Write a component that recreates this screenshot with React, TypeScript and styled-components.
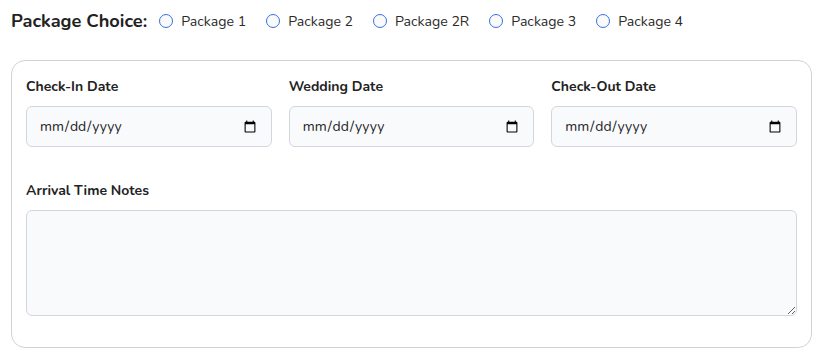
import styled, { createGlobalStyle } from 'styled-components';

const GlobalStyle = createGlobalStyle`
	* { box-sizing: border-box; }
	body {
		margin: 0;
		background: #ffffff;
		font-family: 'Nunito', Lato, 'Open Sans', sans-serif;
		color: #222222;
	}
`;

const Page = styled.div`
	padding: 10px 17px 0 11px;
`;

const ChoiceRow = styled.div`
	display: flex;
	align-items: center;
	height: 22px;
`;

const ChoiceTitle = styled.span`
	font-size: 18.2px;
	font-weight: 700;
	color: #222222;
	margin-right: 12px;
`;

const RadioLabel = styled.label`
	display: flex;
	align-items: center;
	gap: 8px;
	font-size: 14.1px;
	color: #2a2a2a;
	margin-right: 20px;
	cursor: pointer;
`;

const Radio = styled.input`
	appearance: none;
	margin: 0;
	width: 14px;
	height: 14px;
	border-radius: 50%;
	border: 1.5px solid #3b6fe0;
	background: #f8fafc;
`;

const Card = styled.div`
	margin-top: 28px;
	border: 1px solid #cfd2d6;
	border-radius: 14px;
	padding: 16px 14px 31px 14px;
`;

const DateGrid = styled.div`
	display: grid;
	grid-template-columns: repeat(3, 1fr);
	gap: 17px;
`;

const Field = styled.div`
	display: flex;
	flex-direction: column;
	gap: 9px;
`;

const FieldLabel = styled.label`
	font-size: 14px;
	font-weight: 700;
	line-height: 20px;
	color: #222222;
`;

const DateInput = styled.input`
	height: 41px;
	width: 100%;
	padding: 0 12px;
	border: 1px solid #d3d7dd;
	border-radius: 6px;
	background: #f8fafc;
	font-family: inherit;
	font-size: 14px;
	color: #222222;
`;

const NotesField = styled(Field)`
	margin-top: 34px;
`;

const Notes = styled.textarea`
	height: 106px;
	width: 100%;
	border: 1px solid #d3d7dd;
	border-radius: 6px;
	background: #f8fafc;
	font-family: inherit;
	font-size: 14px;
	padding: 10px 12px;
	resize: vertical;
`;

const packages = ['Package 1', 'Package 2', 'Package 2R', 'Package 3', 'Package 4'];

export default function App() {
	return (
		<Page>
			<GlobalStyle />
			<ChoiceRow>
				<ChoiceTitle>Package Choice:</ChoiceTitle>
				{packages.map((p) => (
					<RadioLabel key={p}>
						<Radio type="radio" name="package" value={p} />
						{p}
					</RadioLabel>
				))}
			</ChoiceRow>
			<Card>
				<DateGrid>
					<Field>
						<FieldLabel>Check-In Date</FieldLabel>
						<DateInput type="date" />
					</Field>
					<Field>
						<FieldLabel>Wedding Date</FieldLabel>
						<DateInput type="date" />
					</Field>
					<Field>
						<FieldLabel>Check-Out Date</FieldLabel>
						<DateInput type="date" />
					</Field>
				</DateGrid>
				<NotesField>
					<FieldLabel>Arrival Time Notes</FieldLabel>
					<Notes />
				</NotesField>
			</Card>
		</Page>
	);
}
